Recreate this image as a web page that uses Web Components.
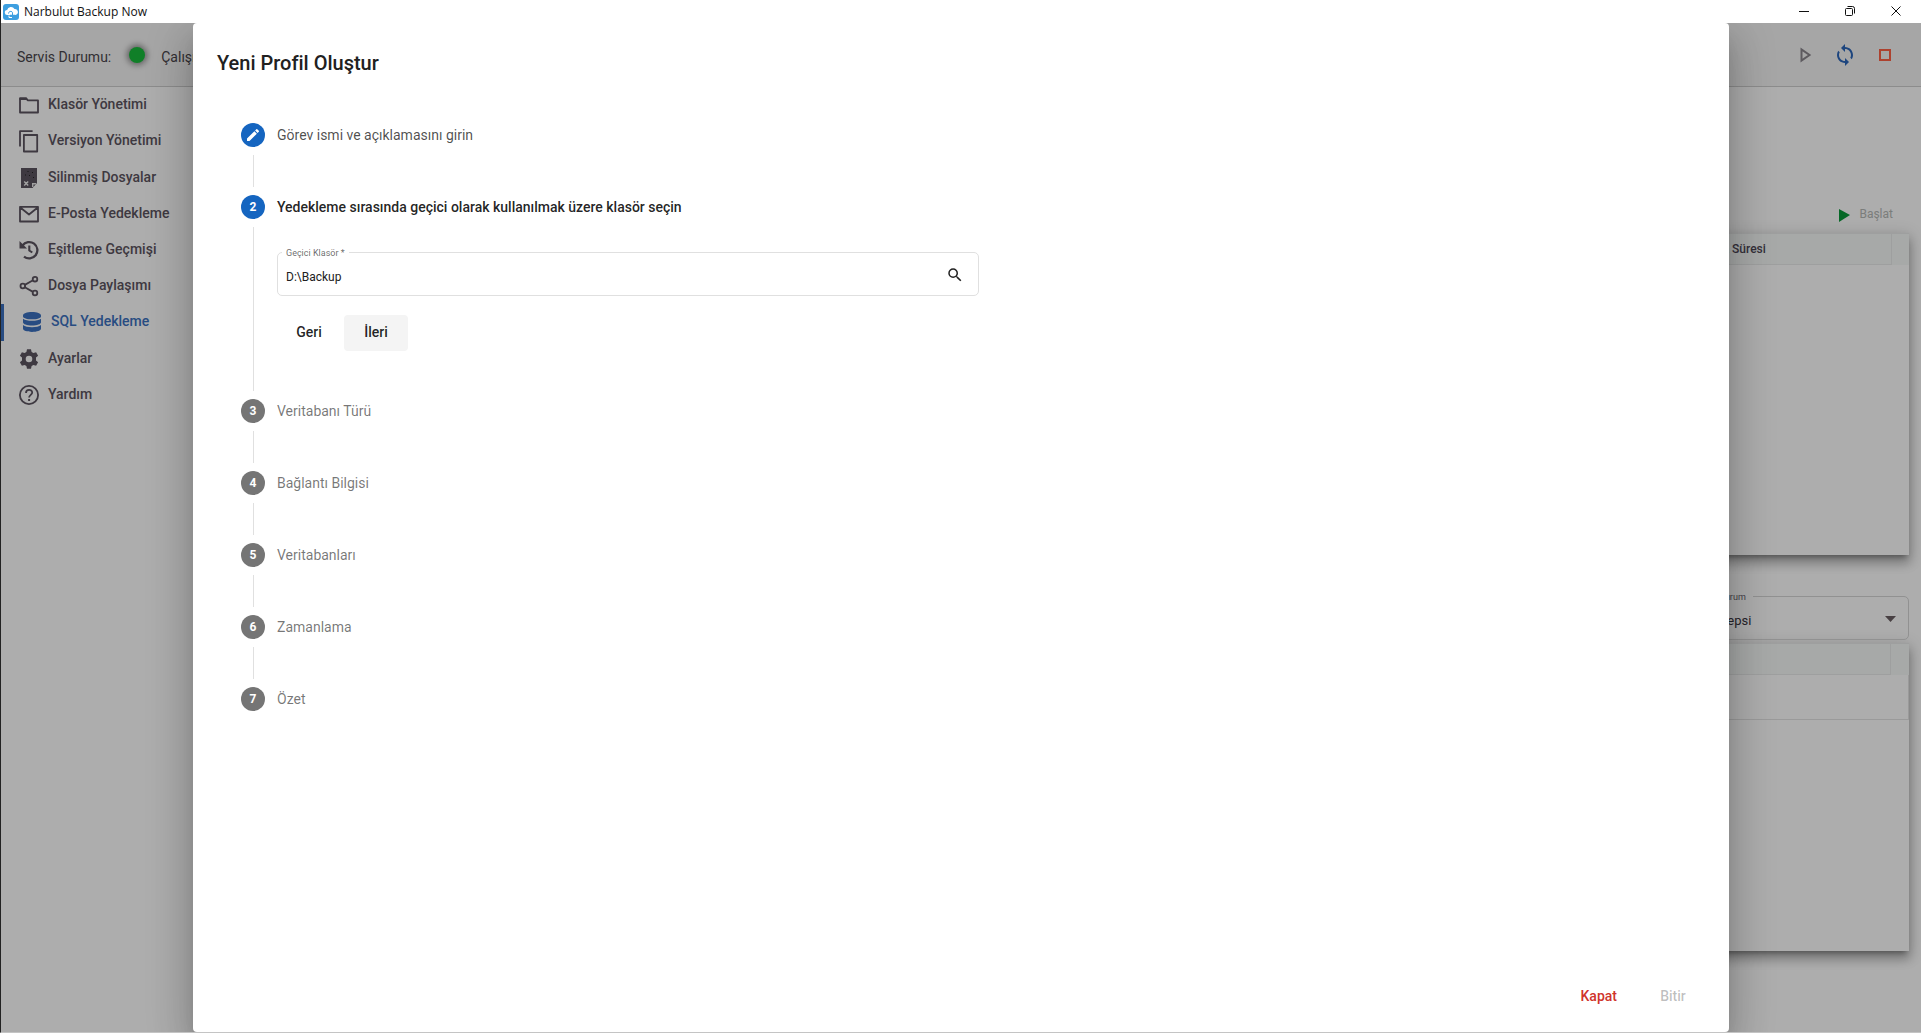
<!DOCTYPE html>
<html lang="tr">
<head>
<meta charset="utf-8">
<title>Narbulut Backup Now</title>
<style>
  body {
    margin: 0;
    font-family: Roboto, "Liberation Sans", sans-serif;
    font-size: 14px;
    --primary: #1565c0;
    --ink: #212121;
    --nav-ink: #5c5460;
    --line: #e0e0e0;
  }
</style>
</head>
<body>
<app-window>
  <title-bar slot="title">Narbulut Backup Now</title-bar>
  <status-toolbar slot="toolbar"></status-toolbar>
  <side-nav slot="nav">
    <nav-item icon="folder">Klasör Yönetimi</nav-item>
    <nav-item icon="copy">Versiyon Yönetimi</nav-item>
    <nav-item icon="deleted">Silinmiş Dosyalar</nav-item>
    <nav-item icon="mail">E-Posta Yedekleme</nav-item>
    <nav-item icon="history">Eşitleme Geçmişi</nav-item>
    <nav-item icon="share">Dosya Paylaşımı</nav-item>
    <nav-item icon="database" active>SQL Yedekleme</nav-item>
    <nav-item icon="gear">Ayarlar</nav-item>
    <nav-item icon="help">Yardım</nav-item>
  </side-nav>
  <sql-page slot="page"></sql-page>
  <profile-dialog slot="dialog" heading="Yeni Profil Oluştur">
    <step-item mark="edit" state="done" label="Görev ismi ve açıklamasını girin"></step-item>
    <step-item mark="2" state="active" label="Yedekleme sırasında geçici olarak kullanılmak üzere klasör seçin">
      <folder-form></folder-form>
    </step-item>
    <step-item mark="3" label="Veritabanı Türü"></step-item>
    <step-item mark="4" label="Bağlantı Bilgisi"></step-item>
    <step-item mark="5" label="Veritabanları"></step-item>
    <step-item mark="6" label="Zamanlama"></step-item>
    <step-item mark="7" label="Özet" last></step-item>
    <flat-button slot="actions" tone="warn">Kapat</flat-button>
    <flat-button slot="actions" disabled>Bitir</flat-button>
  </profile-dialog>
</app-window>

<script>
const ICONS = {
  folder: `<path fill="none" stroke="currentColor" stroke-width="1.8" stroke-linejoin="round" d="M1 3.3h6l1.6 2H19v12.200H1z"/><path fill="currentColor" d="M.5 2.6h7.100l1.700 2.500H.5z"/>`,
  copy: `<path fill="none" stroke="currentColor" stroke-width="1.8" stroke-linejoin="round" d="M1 15.500V.2h12.600M4.900 4h13.300v16.500H4.900z"/>`,
  deleted: `<path fill="currentColor" d="M2 0h16v15l-4.500 5H2z"/><path fill="#222" d="M8.500 3h1v1h-1zM13 4h1v1h-1zM6 6.500h1v1H6zM10 7h1v1h-1zM14 9h1v1h-1z"/><path fill="none" stroke="#eee" stroke-width="1.400" d="M5.200 13.500l4 4m0-4l-4 4M13.700 19v-3.300H17"/>`,
  mail: `<path fill="none" stroke="currentColor" stroke-width="1.8" stroke-linejoin="round" d="M1 2.800h18v14.700H1zM1.300 3.500L10 10.500l8.700-7"/>`,
  history: `<path fill="none" stroke="currentColor" stroke-width="2.300" d="M3.500 5.500A8.200 8.200 0 1 1 5 16.600"/><path fill="currentColor" d="M.5 1v7.500H8z"/><path fill="none" stroke="currentColor" stroke-width="2.100" d="M10.300 5.500v5l3 2"/>`,
  share: `<g fill="none" stroke="currentColor" stroke-width="1.800"><circle cx="16" cy="3.200" r="2.300"/><circle cx="3.800" cy="10" r="2.300"/><circle cx="16" cy="17" r="2.300"/><path d="M5.800 8.900l8.200-4.600M5.800 11.200l8.200 4.700"/></g>`,
  database: `<path fill="currentColor" d="M1 3.400C1 1.500 5 0 10 0s9 1.500 9 3.400v1C19 6 15 7.300 10 7.300S1 6 1 4.400zM1 6.800c2 1.400 5 2 9 2s7-.6 9-2v3.500c0 1.900-4 3.300-9 3.300s-9-1.400-9-3.300zM1 13c2 1.500 5 2.200 9 2.200s7-.7 9-2.200v3.600c0 2-4 3.400-9 3.400s-9-1.400-9-3.400z"/>`,
  gear: `<path fill="currentColor" fill-rule="evenodd" d="M8 .3h4l.6 2.800 1.800 1 2.700-.9 2 3.500-2.100 1.900v2.800l2.100 1.900-2 3.500-2.700-.9-1.800 1-.6 2.800H8l-.6-2.800-1.800-1-2.700.9-2-3.500L3 11.400V8.600L.9 6.700l2-3.500 2.700.9 1.800-1zM10 6.700a3.300 3.300 0 1 0 0 6.600 3.300 3.300 0 0 0 0-6.600z"/>`,
  help: `<circle cx="10" cy="10" r="9.100" fill="none" stroke="currentColor" stroke-width="1.800"/><path fill="none" stroke="currentColor" stroke-width="1.800" d="M7 8c0-4 6.200-4 6.200-.4 0 2.300-3.100 2.300-3.100 5"/><path fill="currentColor" d="M9.100 14h2v2h-2z"/>`
};

function define(name, html, setup) {
  const template = document.createElement("template");
  template.innerHTML = html;
  customElements.define(name, class extends HTMLElement {
    constructor() {
      super();
      this.attachShadow({ mode: "open" });
    }
    connectedCallback() {
      this.shadowRoot.replaceChildren(template.content.cloneNode(true));
      if (setup) setup(this, this.shadowRoot);
    }
  });
}

define("app-window", `
  <style>
    :host {
      box-sizing: border-box;
      display: flex;
      flex-direction: column;
      height: 100vh;
      border-left: 1px solid #222;
      border-bottom: 1px solid #c4c4c4;
      overflow: hidden;
    }
    .client { position: relative; flex: 1; min-height: 0; display: flex; flex-direction: column; }
    .body { flex: 1; min-height: 0; display: flex; }
    .backdrop {
      position: absolute;
      inset: 0;
      display: flex;
      justify-content: center;
      background: rgba(0, 0, 0, .32);
      overflow: hidden;
    }
  </style>
  <slot name="title"></slot>
  <div class="client">
    <slot name="toolbar"></slot>
    <div class="body">
      <slot name="nav"></slot>
      <slot name="page"></slot>
    </div>
    <div class="backdrop"><slot name="dialog"></slot></div>
  </div>
`);

define("title-bar", `
  <style>
    :host {
      display: flex;
      align-items: center;
      height: 23px;
      padding: 0 2px;
      background: #fff;
      color: #111;
      font: 12px "Open Sans", "Noto Sans", sans-serif;
    }
    .name { flex: 1; padding-left: 5px; }
    button {
      width: 46px;
      height: 23px;
      padding: 0 0 2px;
      border: 0;
      background: none;
      color: #111;
    }
    svg { display: block; margin: auto; }
    .logo { margin: 0; }
  </style>
  <svg class="logo" width="16" height="16" viewBox="0 0 16 16">
    <rect width="16" height="16" rx="3" fill="#3d9fe0"/>
    <path fill="#fff" d="M4.500 11a2.500 2.500 0 0 1-.4-5A4 4 0 0 1 11.500 5a3 3 0 0 1 .8 6z"/>
    <path fill="none" stroke="#3d9fe0" d="M5.500 9.500c0-2.500 4-3 4-.5v3M8 10.500l1.500 1.800 1.500-1.800"/>
    <path fill="none" stroke="#fff" d="M6 11.500v2h3"/>
  </svg>
  <span class="name"><slot></slot></span>
  <button aria-label="Simge durumuna küçült"><svg width="12" height="12"><path d="M1 6.500h10" stroke="currentColor"/></svg></button>
  <button aria-label="Geri yükle"><svg width="12" height="12" fill="none" stroke="currentColor"><rect x="1.500" y="3.500" width="7" height="7" rx="1"/><path d="M3.500 1.500h5a2 2 0 0 1 2 2v5"/></svg></button>
  <button aria-label="Kapat"><svg width="12" height="12"><path d="M1.500 1.500l9 9m0-9l-9 9" stroke="currentColor"/></svg></button>
`);

define("status-toolbar", `
  <style>
    :host {
      display: flex;
      align-items: center;
      justify-content: space-between;
      height: 63px;
      padding: 0 16px;
      background: #f5f5f5;
      border-bottom: 1px solid #cfcfcf;
      color: #4a464c;
    }
    .status { display: flex; align-items: center; }
    .status span { padding-top: 4px; }
    .dot {
      width: 16px;
      height: 16px;
      margin: 0 16px 0 18px;
      border-radius: 50%;
      background: #18bc3b;
      box-shadow: 0 0 6px 2px rgba(0, 0, 0, .45);
    }
    .tools { display: flex; }
    button { width: 40px; height: 40px; padding: 0; border: 0; background: none; }
    svg { display: block; margin: auto; }
  </style>
  <div class="status"><span>Servis Durumu:</span><i class="dot"></i><span>Çalışıyor</span></div>
  <div class="tools">
    <button aria-label="Başlat"><svg width="24" height="24"><path d="M8.500 6.500v11l8-5.500z" fill="none" stroke="#8a858c" stroke-width="2"/></svg></button>
    <button aria-label="Yenile"><svg width="24" height="24"><path fill="#2c66ba" d="M12 4V1L8 5l4 4V6c3.310 0 6 2.690 6 6 0 1.010-.25 1.970-.7 2.800l1.460 1.460C19.540 15.030 20 13.570 20 12c0-4.420-3.580-8-8-8zm0 14c-3.310 0-6-2.690-6-6 0-1.010.25-1.970.7-2.800L5.240 7.740C4.460 8.970 4 10.430 4 12c0 4.420 3.580 8 8 8v3l4-4-4-4v3z"/></svg></button>
    <button aria-label="Durdur"><svg width="24" height="24"><rect x="7" y="7" width="10" height="10" fill="none" stroke="#ff6045" stroke-width="2"/></svg></button>
  </div>
`);

define("side-nav", `
  <style>
    :host { flex: none; width: 216px; background: #fff; }
    nav { display: grid; grid-auto-rows: 1fr; height: 326px; }
  </style>
  <nav><slot></slot></nav>
`);

define("nav-item", `
  <style>
    :host { display: flex; color: var(--nav-ink); }
    :host([active]) { color: #3b71c0; border-left: 3px solid #3b71c0; }
    a {
      display: flex;
      align-items: center;
      gap: 9px;
      padding: 0 0 2px 18px;
      color: inherit;
      font-weight: 500;
      text-decoration: none;
    }
    svg { margin-top: 2px; overflow: visible; }
  </style>
  <a href="#"><svg width="20" height="20" viewBox="0 0 20 20"></svg><span><slot></slot></span></a>
`, (host, root) => {
  root.querySelector("svg").innerHTML = ICONS[host.getAttribute("icon")];
});

define("data-card", `
  <style>
    :host {
      display: block;
      background: #fff;
      box-shadow: 0 5px 5px -3px rgba(0, 0, 0, .3), 0 8px 10px 1px rgba(0, 0, 0, .2), 0 3px 14px 2px rgba(0, 0, 0, .16);
    }
    table { width: 100%; border-collapse: collapse; table-layout: fixed; font-size: 12px; }
    th {
      box-sizing: border-box;
      height: 31px;
      padding: 0 8px;
      border: 1px solid #e9ebeb;
      background: #f6f9f8;
      color: #4f4856;
      font-weight: 500;
      text-align: left;
    }
    th:nth-child(2) { width: 214px; }
    th:last-child { width: 18px; padding: 0; border-right: 0; border-bottom: 0; }
    td { height: 44px; padding: 0; border-bottom: 1px solid #e4e4e4; border-right: 1px solid #e4e4e4; }
  </style>
  <table>
    <thead><tr><th></th><th></th><th></th></tr></thead>
    <tbody></tbody>
  </table>
`, (host, root) => {
  root.querySelectorAll("th")[1].textContent = host.getAttribute("column") || "";
  if (host.hasAttribute("row")) root.querySelector("tbody").innerHTML = `<tr><td colspan="3"></td></tr>`;
});

define("sql-page", `
  <style>
    :host {
      flex: 1;
      display: flex;
      flex-direction: column;
      padding: 110px 12px 81px 12px;
      background: #fff;
    }
    .start {
      align-self: flex-end;
      display: flex;
      align-items: center;
      gap: 8px;
      height: 36px;
      padding: 0 16px 2px 0;
      border: 0;
      background: none;
      color: #b5b8b6;
      font: 12px Roboto, sans-serif;
    }
    .start svg { margin-top: 2px; }
    .jobs { flex: 322 0 0; }
    .logs { flex: 308 0 0; }
    .filter {
      position: relative;
      align-self: flex-end;
      box-sizing: border-box;
      width: 224px;
      height: 44px;
      margin: 41px 0 3px;
      border: 1px solid #d6d6d6;
      border-radius: 5px;
    }
    label {
      position: absolute;
      top: -6px;
      left: 29px;
      padding: 0 7px 0 4px;
      background: #fff;
      color: #66606a;
      font-size: 9px;
      line-height: 12px;
    }
    select {
      width: 100%;
      height: 100%;
      padding: 5px 32px 0 32px;
      border: 0;
      appearance: none;
      background: none;
      color: #3a363d;
      font: 13px Roboto, sans-serif;
    }
    .arrow { position: absolute; top: 19px; right: 12px; }
  </style>
  <button class="start" disabled><svg width="12" height="14"><path d="M0 1v13l11-7z" fill="#0a9a3a"/></svg>Başlat</button>
  <data-card class="jobs" column="Çalışma Süresi"></data-card>
  <div class="filter">
    <label for="state">Durum</label>
    <select id="state"><option>Hepsi</option></select>
    <svg class="arrow" width="11" height="6"><path d="M0 0h11L5.500 6z" fill="#6a5f63"/></svg>
  </div>
  <data-card class="logs" row></data-card>
`);

define("profile-dialog", `
  <style>
    :host {
      box-sizing: border-box;
      display: flex;
      flex-direction: column;
      width: 80%;
      padding: 24px 24px 17px;
      background: #fff;
      border-radius: 4px;
      color: var(--ink);
      box-shadow: 0 11px 15px -7px rgba(0, 0, 0, .2), 0 24px 38px 3px rgba(0, 0, 0, .14), 0 9px 46px 8px rgba(0, 0, 0, .12);
    }
    h1 { margin: 0 0 20px; font-size: 20px; font-weight: 500; line-height: 32px; }
    .steps { flex: 1; padding: 24px 24px 0; }
    footer { display: flex; justify-content: flex-end; gap: 8px; }
  </style>
  <h1></h1>
  <div class="steps"><slot></slot></div>
  <footer><slot name="actions"></slot></footer>
`, (host, root) => {
  root.querySelector("h1").textContent = host.getAttribute("heading");
});

define("step-item", `
  <style>
    :host { display: flex; gap: 12px; min-height: 72px; color: rgba(0, 0, 0, .54); }
    :host([last]) { min-height: 24px; }
    :host([state=done]) { color: rgba(0, 0, 0, .7); }
    :host([state=active]) { color: rgba(0, 0, 0, .87); }
    .rail { display: flex; flex-direction: column; align-items: center; width: 24px; }
    .mark {
      display: flex;
      align-items: center;
      justify-content: center;
      width: 24px;
      height: 24px;
      border-radius: 50%;
      background: #757575;
      color: #fff;
      font-size: 12px;
      font-weight: 700;
    }
    :host([state]) .mark { background: var(--primary); }
    .line { flex: 1; width: 1px; margin: 8px 0; background: var(--line); }
    :host([last]) .line { display: none; }
    .main { flex: 1; }
    .label { line-height: 24px; }
    :host([state=active]) .label { font-weight: 500; }
  </style>
  <div class="rail"><span class="mark"></span><i class="line"></i></div>
  <div class="main"><div class="label"></div><slot></slot></div>
`, (host, root) => {
  const mark = host.getAttribute("mark");
  root.querySelector(".label").textContent = host.getAttribute("label");
  root.querySelector(".mark").innerHTML = mark === "edit"
    ? `<svg width="16" height="16" viewBox="0 0 24 24"><path fill="#fff" d="M3 17.250V21h3.750L17.810 9.940l-3.750-3.750zM20.710 7.040a1 1 0 0 0 0-1.410l-2.340-2.340a1 1 0 0 0-1.410 0l-1.830 1.830 3.750 3.750z"/></svg>`
    : mark;
});

define("folder-form", `
  <style>
    :host { display: block; padding: 33px 0 48px; }
    .field {
      position: relative;
      box-sizing: border-box;
      display: flex;
      align-items: center;
      width: 50%;
      height: 44px;
      border: 1px solid var(--line);
      border-radius: 5px;
    }
    label {
      position: absolute;
      top: -6px;
      left: 4px;
      padding: 0 4px;
      background: #fff;
      color: rgba(0, 0, 0, .6);
      font-size: 9px;
      line-height: 12px;
    }
    input {
      flex: 1;
      height: 100%;
      box-sizing: border-box;
      padding: 5px 8px 0;
      border: 0;
      outline: 0;
      background: none;
      color: var(--ink);
      font: 12px Roboto, sans-serif;
    }
    .search { width: 40px; height: 40px; margin-right: 3px; padding: 2px 0 0; border: 0; background: none; }
    .search svg { display: block; margin: auto; }
    .buttons { display: flex; gap: 3px; margin-top: 19px; }
  </style>
  <div class="field">
    <label for="folder">Geçici Klasör *</label>
    <input id="folder" value="D:\\Backup">
    <button class="search" aria-label="Klasör ara"><svg width="18" height="18" viewBox="0 0 24 24"><path fill="#212121" d="M15.500 14h-.79l-.28-.27A6.471 6.471 0 0 0 16 9.500 6.500 6.500 0 1 0 9.500 16c1.610 0 3.090-.59 4.230-1.570l.27.28v.79l5 4.990L20.490 19zm-6 0C7.010 14 5 11.990 5 9.500S7.010 5 9.500 5 14 7.010 14 9.500 11.990 14 9.500 14z"/></svg></button>
  </div>
  <div class="buttons">
    <flat-button>Geri</flat-button>
    <flat-button focused>İleri</flat-button>
  </div>
`);

define("flat-button", `
  <style>
    :host { display: block; }
    button {
      min-width: 64px;
      height: 36px;
      padding: 0 16px 2px;
      border: 0;
      border-radius: 4px;
      background: none;
      color: rgba(0, 0, 0, .87);
      font: 500 14px Roboto, sans-serif;
    }
    :host([focused]) button { background: #f4f4f4; }
    :host([tone=warn]) button { color: #d0342c; }
    button:disabled { color: rgba(0, 0, 0, .26); }
  </style>
  <button><slot></slot></button>
`, (host, root) => {
  root.querySelector("button").disabled = host.hasAttribute("disabled");
});
</script>
</body>
</html>
